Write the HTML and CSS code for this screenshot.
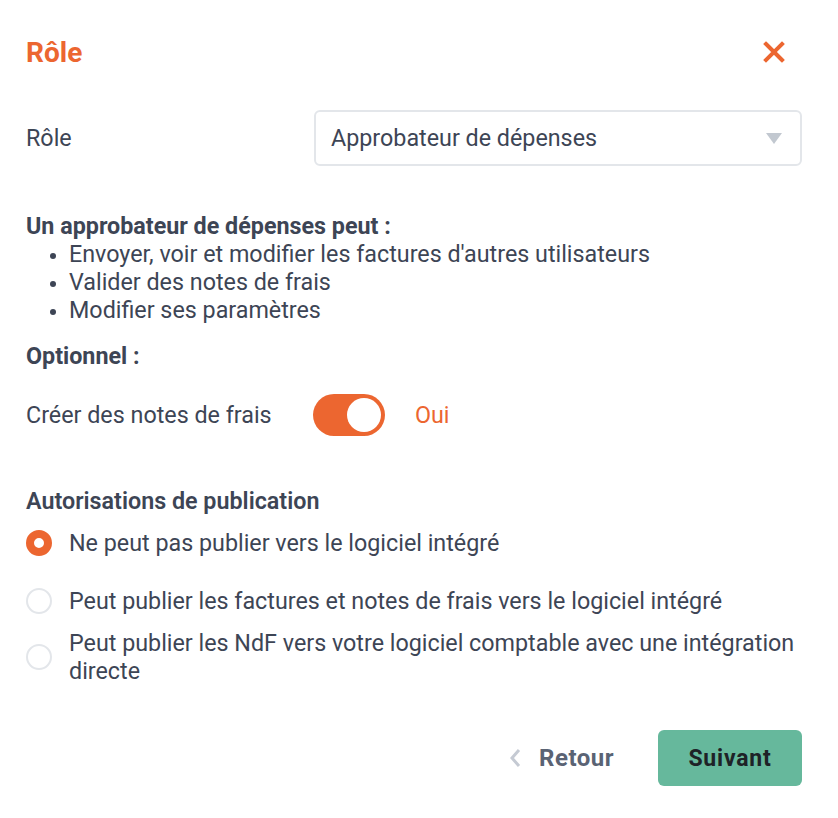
FILE: index.html
```html
<!DOCTYPE html>
<html lang="fr">
<head>
<meta charset="utf-8">
<link rel="stylesheet" href="styles.css">
</head>
<body>
<div class="modal">
  <header class="head">
    <h1 class="title">Rôle</h1>
    <button class="close" aria-label="Fermer">
      <svg width="22" height="22" viewBox="0 0 22 22"><path d="M3 3 L19 19 M19 3 L3 19" stroke="#ec6630" stroke-width="4" stroke-linecap="square"/></svg>
    </button>
  </header>

  <div class="field-row">
    <span class="label">Rôle</span>
    <div class="select">
      <span>Approbateur de dépenses</span>
      <svg class="caret" width="16" height="12" viewBox="0 0 16 12"><path d="M0 1 H16 L8 12 Z" fill="#c2c8d0"/></svg>
    </div>
  </div>

  <p class="strong desc">Un approbateur de dépenses peut :</p>
  <ul class="rights">
    <li>Envoyer, voir et modifier les factures d'autres utilisateurs</li>
    <li>Valider des notes de frais</li>
    <li>Modifier ses paramètres</li>
  </ul>

  <p class="strong opt">Optionnel :</p>
  <div class="toggle-row">
    <span class="label">Créer des notes de frais</span>
    <span class="toggle"><span class="knob"></span></span>
    <span class="oui">Oui</span>
  </div>

  <p class="strong pub">Autorisations de publication</p>
  <div class="radios">
    <div class="radio-row r1"><span class="radio on"></span><span>Ne peut pas publier vers le logiciel intégré</span></div>
    <div class="radio-row r2"><span class="radio"></span><span>Peut publier les factures et notes de frais vers le logiciel intégré</span></div>
    <div class="radio-row r3"><span class="radio"></span><span>Peut publier les NdF vers votre logiciel comptable avec une intégration directe</span></div>
  </div>

  <footer class="foot">
    <button class="back">
      <svg width="14" height="22" viewBox="0 0 14 22"><path d="M11 3 L4 11 L11 19" fill="none" stroke="#c5cad3" stroke-width="3"/></svg>
      <span>Retour</span>
    </button>
    <button class="next">Suivant</button>
  </footer>
</div>
</body>
</html>
```

FILE: styles.css
```css
* { box-sizing: border-box; }
html, body { margin: 0; padding: 0; background: #ffffff; }
body {
  font-family: Roboto, "Liberation Sans", sans-serif;
  color: #3d4555;
  font-size: 23.3px;
}
.modal {
  width: 838px;
  padding: 30px 36px 0 26px;
}
.head {
  display: flex;
  justify-content: space-between;
  align-items: center;
  height: 44px;
}
.title {
  margin: 0;
  font-size: 28px;
  font-weight: 700;
  color: #ec6630;
}
.close {
  border: 0;
  background: none;
  padding: 0;
  margin-right: 17px;
  display: flex;
}
.field-row {
  display: flex;
  align-items: center;
  margin-top: 36px;
}
.field-row .label { width: 288px; }
.select {
  flex: 1;
  height: 56px;
  border: 2px solid #e3e6ea;
  border-radius: 6px;
  display: flex;
  align-items: center;
  justify-content: space-between;
  padding: 0 18px 0 15px;
}
p { margin: 0; }
.strong { font-weight: 700; }
.desc { margin-top: 46px; line-height: 28px; }
.rights {
  margin: 0;
  padding: 0 0 0 43px;
  line-height: 28px;
}
.rights li { height: 28px; }
.rights li::marker { font-size: 21px; }
.opt { margin-top: 18px; line-height: 28px; }
.toggle-row {
  display: flex;
  align-items: center;
  margin-top: 24px;
}
.toggle-row .label { width: 287px; }
.toggle {
  width: 72px;
  height: 42px;
  border-radius: 21px;
  background: #ec6630;
  display: flex;
  align-items: center;
  justify-content: flex-end;
  padding-right: 4px;
}
.knob {
  width: 34px;
  height: 34px;
  border-radius: 50%;
  background: #fff;
}
.oui { color: #ec6630; margin-left: 30px; }
.pub { margin-top: 51px; line-height: 28px; font-weight: 600; }
.radios { display: flex; flex-direction: column; }
.radio-row {
  display: flex;
  align-items: center;
  gap: 17px;
  line-height: 28px;
}
.r1 { margin-top: 14px; }
.r2 { margin-top: 30px; }
.r3 { margin-top: 14px; }
.radio {
  flex: none;
  width: 26px;
  height: 26px;
  border-radius: 50%;
  border: 2px solid #e3e6ea;
  background: #fff;
}
.radio.on {
  border: 8px solid #ec6630;
}
.foot {
  display: flex;
  justify-content: flex-end;
  align-items: center;
  margin-top: 45px;
}
button { font-family: inherit; cursor: pointer; }
.back {
  border: 0;
  background: none;
  display: flex;
  align-items: center;
  gap: 17px;
  font-size: 24px;
  font-weight: 700;
  color: #5a6374;
  padding: 0;
  margin-right: 44px;
  letter-spacing: 0.5px;
}
.next {
  width: 144px;
  height: 56px;
  border: 0;
  border-radius: 6px;
  background: #66b89c;
  color: #1e2227;
  font-size: 23px;
  font-weight: 700;
  letter-spacing: 0.8px;
}
```
